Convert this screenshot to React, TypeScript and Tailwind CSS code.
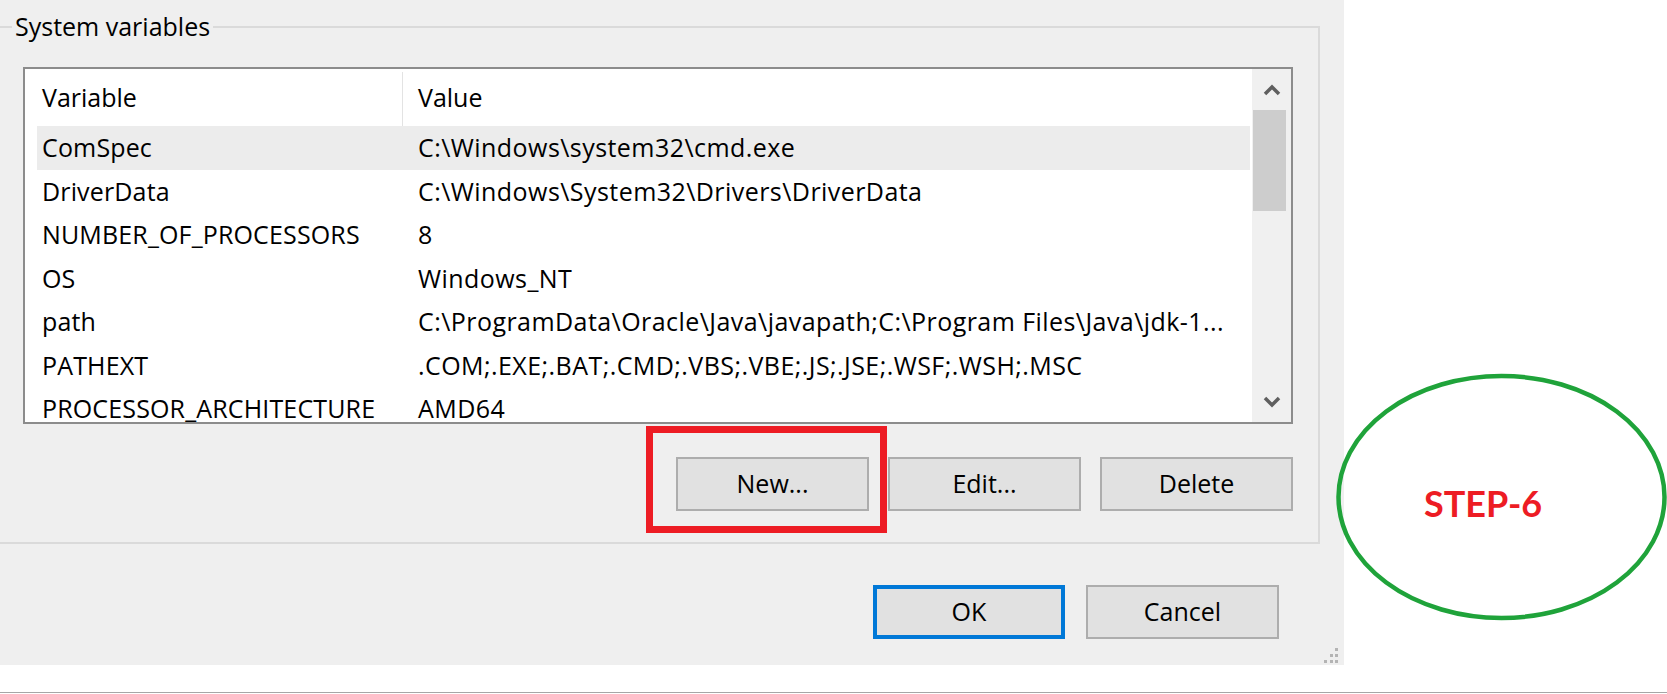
import React from 'react';

const rows = [
  { name: 'ComSpec', value: 'C:\\Windows\\system32\\cmd.exe' },
  { name: 'DriverData', value: 'C:\\Windows\\System32\\Drivers\\DriverData' },
  { name: 'NUMBER_OF_PROCESSORS', value: '8' },
  { name: 'OS', value: 'Windows_NT' },
  { name: 'path', value: 'C:\\ProgramData\\Oracle\\Java\\javapath;C:\\Program Files\\Java\\jdk-1...' },
  { name: 'PATHEXT', value: '.COM;.EXE;.BAT;.CMD;.VBS;.VBE;.JS;.JSE;.WSF;.WSH;.MSC' },
  { name: 'PROCESSOR_ARCHITECTURE', value: 'AMD64' },
];

function Chevron({ up }: { up?: boolean }) {
  return (
    <svg width="18" height="12" viewBox="0 0 18 12">
      <polyline
        points={up ? '2,10 9,3 16,10' : '2,2 9,9 16,2'}
        fill="none"
        stroke="#5f5f5f"
        strokeWidth="3.5"
      />
    </svg>
  );
}

function WinButton({ label, focused }: { label: string; focused?: boolean }) {
  return (
    <div
      className={`flex items-center justify-center h-[54px] bg-[#e1e1e1] ${
        focused ? 'w-[192px] border-[4px] border-[#0078d7]' : 'w-[193px] border-2 border-[#adadad]'
      }`}
    >
      {label}
    </div>
  );
}

export default function App() {
  return (
    <div className="relative w-[1667px] h-[694px] bg-white overflow-hidden font-['Open_Sans',sans-serif] text-[25px] text-black">
      <div className="relative w-[1344px] h-[665px] bg-[#efefef] pt-[26px]">
        {/* System variables group */}
        <div className="relative -ml-[4px] w-[1324px] h-[518px] border-2 border-[#dadada]">
          <span className="absolute left-[14px] -top-[2px] -translate-y-1/2 px-[3px] bg-[#efefef] leading-[34px]">
            System variables
          </span>

          <div className="mt-[39px] ml-[25px] w-[1270px] h-[357px] border-2 border-[#8c8c8c] bg-white flex">
            <div className="flex-1 flex flex-col overflow-hidden">
              <div className="h-[57px] shrink-0 flex">
                <div className="w-[377px] pl-[17px] flex items-center">Variable</div>
                <div className="w-[1px] h-[54px] self-end bg-[#e3e3e3]" />
                <div className="pl-[15px] flex items-center">Value</div>
              </div>
              {rows.map((row, i) => (
                <div
                  key={row.name}
                  className={`h-[43.5px] shrink-0 ml-[12px] mr-[2px] flex items-center whitespace-nowrap ${
                    i === 0 ? 'bg-[#ececec]' : ''
                  }`}
                >
                  <div className="w-[365px] pl-[5px] tracking-[0.15px]">{row.name}</div>
                  <div className="pl-[16px] tracking-[0.44px]">{row.value}</div>
                </div>
              ))}
            </div>
            <div className="w-[39px] bg-[#f0f0f0] flex flex-col">
              <div className="h-[41px] flex items-center justify-center">
                <Chevron up />
              </div>
              <div className="ml-[1px] w-[33px] h-[101px] bg-[#cdcdcd]" />
              <div className="flex-1" />
              <div className="h-[41px] flex items-center justify-center">
                <Chevron />
              </div>
            </div>
          </div>

          <div className="mt-[33px] ml-[25px] w-[1270px] flex justify-end gap-[19px]">
            <WinButton label="New..." />
            <WinButton label="Edit..." />
            <WinButton label="Delete" />
          </div>
        </div>

        <div className="mt-[41px] pr-[65px] flex justify-end gap-[21px]">
          <WinButton label="OK" focused />
          <WinButton label="Cancel" />
        </div>

        {/* size grip */}
        <svg className="absolute right-[4px] bottom-[1px]" width="18" height="18" viewBox="0 0 18 18">
          <rect x="13" y="2" width="3" height="3" fill="#b4b4b4" />
          <rect x="8" y="8" width="3" height="3" fill="#b4b4b4" />
          <rect x="13" y="8" width="3" height="3" fill="#b4b4b4" />
          <rect x="2" y="14" width="3" height="3" fill="#b4b4b4" />
          <rect x="8" y="14" width="3" height="3" fill="#b4b4b4" />
          <rect x="13" y="14" width="3" height="3" fill="#b4b4b4" />
        </svg>
      </div>

      <div className="mt-[27px] h-[1px] bg-[#a6a6a6]" />

      {/* annotations */}
      <div className="absolute left-[646px] top-[426px] w-[241px] h-[107px] border-[7px] border-[#ed1c24]" />
      <svg className="absolute left-[1336px] top-[373px]" width="331" height="248" viewBox="0 0 331 248">
        <ellipse cx="165.5" cy="124" rx="163" ry="121" fill="none" stroke="#1fa33a" strokeWidth="4.5" />
      </svg>
      <span className="absolute left-[1424px] top-[480px] font-['Lato',sans-serif] font-bold text-[36px] leading-[46px] text-[#ed1c24]">
        STEP-6
      </span>
    </div>
  );
}
